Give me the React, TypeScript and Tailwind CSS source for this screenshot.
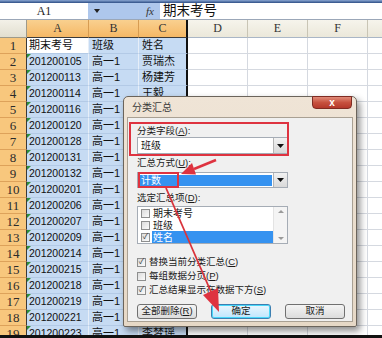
import React from 'react';

const cjk = "font-['Liberation_Sans','Noto_Sans_CJK_SC',sans-serif]";
const serif = "font-['Liberation_Serif','Noto_Sans_CJK_SC',serif]";

const rows = [
  ['期末考号', '班级', '姓名'],
  ['201200105', '高一1', '贾瑞杰'],
  ['201200113', '高一1', '杨建芳'],
  ['201200114', '高一1', '王毅'],
  ['201200116', '高一1', ''],
  ['201200120', '高一1', ''],
  ['201200128', '高一1', ''],
  ['201200131', '高一1', ''],
  ['201200132', '高一1', ''],
  ['201200201', '高一1', ''],
  ['201200206', '高一1', ''],
  ['201200207', '高一1', ''],
  ['201200209', '高一1', ''],
  ['201200214', '高一1', ''],
  ['201200215', '高一1', ''],
  ['201200218', '高一1', ''],
  ['201200219', '高一1', ''],
  ['201200221', '高一1', ''],
  ['201200223', '高一1', '李梦瑶'],
];

function Mn({ label, k }: { label: string; k: string }) {
  return (
    <>
      {label}(<span className="underline">{k}</span>)
    </>
  );
}

function Check({ on }: { on: boolean }) {
  return (
    <span className="flex h-[9px] w-[9px] shrink-0 items-center justify-center border border-[#8e8f8f] bg-gradient-to-br from-[#dcdcdc] to-[#fbfbfb] text-[8px] leading-none text-[#333]">
      {on ? '✓' : ''}
    </span>
  );
}

function DropBtn() {
  return (
    <div className="flex h-full w-[14px] shrink-0 items-center justify-center border-l border-[#b5b5b5] bg-gradient-to-b from-[#f2f2f2] to-[#d9d9d9]">
      <svg width="7" height="4" viewBox="0 0 7 4">
        <path d="M0 0h7L3.5 4z" fill="#111" />
      </svg>
    </div>
  );
}

function SheetRow({ n, a, b, c }: { n: number; a: string; b: string; c: string }) {
  const first = n === 1;
  return (
    <div className="flex h-[16px] shrink-0">
      <div className={`w-[27px] shrink-0 border-b border-r border-b-[#dda25a] border-r-[#3a3a3a] bg-[#f8c77d] text-center text-[13px] leading-[15px] text-[#2b2b2b] ${serif}`}>
        {n}
      </div>
      <div className={`relative w-[62px] shrink-0 border-b border-r border-b-[#b3cae6] border-r-[#e6eef8] pl-[2px] text-[11px] leading-[15px] text-[#111] ${cjk} ${first ? 'bg-white' : 'bg-[#c6dbf3]'}`}>
        {!first && (
          <span className="absolute left-0 top-0 h-0 w-0 border-r-[4px] border-t-[4px] border-r-transparent border-t-[#2f8f3a]" />
        )}
        <span className={first ? '' : 'text-[10.5px]'}>{a}</span>
      </div>
      <div className={`w-[50px] shrink-0 border-b border-r border-b-[#b3cae6] border-r-[#e6eef8] bg-[#c6dbf3] pl-[3px] text-[11px] leading-[15px] text-[#111] ${cjk}`}>
        {b}
      </div>
      <div className={`w-[49px] shrink-0 border-b border-r-2 border-b-[#b3cae6] border-r-[#111] bg-[#c6dbf3] pl-[3px] text-[11px] leading-[15px] text-[#111] ${cjk}`}>
        {c}
      </div>
      <div className="w-[60px] shrink-0 border-b border-r border-[#d5d9e0]" />
      <div className="w-[60px] shrink-0 border-b border-r border-[#d5d9e0]" />
      <div className="w-[60px] shrink-0 border-b border-r border-[#d5d9e0]" />
      <div className="flex-1 border-b border-[#d5d9e0]" />
    </div>
  );
}

export default function App() {
  return (
    <div className={`relative h-[338px] w-[382px] overflow-hidden bg-white ${cjk}`}>
      {/* window top edge */}
      <div className="h-[3px] bg-gradient-to-b from-[#8aa6d2] to-[#2f4f86]" />

      {/* formula bar */}
      <div className="flex h-[17px] border-b border-[#9ba7b8]">
        <div className={`flex w-[88px] items-center justify-center text-[12px] text-[#222] ${serif}`}>A1</div>
        <div className="flex w-[72px] items-center bg-[#aec7ec]">
          <svg className="ml-[6px]" width="6" height="4" viewBox="0 0 6 4">
            <path d="M0 0h6L3 4z" fill="#222" />
          </svg>
          <span className={`ml-[46px] text-[11px] italic text-[#333] ${serif}`}>fx</span>
        </div>
        <div className="flex flex-1 items-center pl-[3px] text-[13.5px] leading-none text-[#111]">期末考号</div>
      </div>

      {/* column headers */}
      <div className={`flex h-[18px] text-[12px] leading-[17px] text-[#333] ${serif}`}>
        <div className="w-[27px] shrink-0 border-b border-r border-[#9e9a8a] bg-gradient-to-b from-[#f3f1e8] to-[#e2dfd0]" />
        <div className="w-[62px] shrink-0 border-b border-r border-b-[#3a3a3a] border-r-[#d79c52] bg-gradient-to-b from-[#f9d08f] to-[#f5b865] text-center">A</div>
        <div className="w-[50px] shrink-0 border-b border-r border-b-[#3a3a3a] border-r-[#d79c52] bg-gradient-to-b from-[#f9d08f] to-[#f5b865] text-center">B</div>
        <div className="w-[49px] shrink-0 border-b border-r-2 border-b-[#3a3a3a] border-r-[#111] bg-gradient-to-b from-[#f9d08f] to-[#f5b865] text-center">C</div>
        <div className="w-[60px] shrink-0 border-b border-r border-b-[#a9b6c6] border-r-[#c9c5b5] bg-gradient-to-b from-[#f6f4ec] to-[#ebe8da] text-center">D</div>
        <div className="w-[60px] shrink-0 border-b border-r border-b-[#a9b6c6] border-r-[#c9c5b5] bg-gradient-to-b from-[#f6f4ec] to-[#ebe8da] text-center">E</div>
        <div className="w-[60px] shrink-0 border-b border-r border-b-[#a9b6c6] border-r-[#c9c5b5] bg-gradient-to-b from-[#f6f4ec] to-[#ebe8da] text-center">F</div>
        <div className="flex-1 border-b border-[#a9b6c6] bg-gradient-to-b from-[#f6f4ec] to-[#ebe8da]" />
      </div>

      {/* cells */}
      <div className="flex flex-col">
        {rows.map((r, i) => (
          <SheetRow key={i} n={i + 1} a={r[0]} b={r[1]} c={r[2]} />
        ))}
      </div>

      {/* subtotal dialog */}
      <div className="absolute left-[123px] top-[96px] flex h-[231px] w-[234px] flex-col rounded-t-[5px] rounded-b-[2px] border border-[#6b645b] bg-gradient-to-b from-[#efe4d6] to-[#e6d8c6] shadow-[3px_4px_7px_rgba(0,0,0,0.45)]">
        <div className="flex h-[20px] shrink-0 items-center pl-[8px] text-[10px] text-[#3a3a3a]">分类汇总</div>
        <button className="absolute right-[4px] top-[-1px] flex h-[13px] w-[40px] items-center justify-center rounded-b-[4px] border border-[#7f2b22] bg-gradient-to-b from-[#e08a78] via-[#c7513f] to-[#b4382b] text-[10px] font-bold leading-none text-white">
          x
        </button>

        <div className="mx-[3px] mb-[4px] flex flex-1 flex-col border border-[#a9a093] bg-[#f0f0f0] pl-[9px] pt-[7px] text-[9.5px] text-[#1a1a1a]">
          <div className="h-[12px] leading-[12px]">
            <Mn label="分类字段" k="A" />:
          </div>
          <div className="flex h-[17px] w-[151px] items-center border border-[#a5acb5] bg-white">
            <span className="flex-1 pl-[3px] text-[10px]">班级</span>
            <DropBtn />
          </div>

          <div className="mt-[3px] h-[12px] leading-[12px]">
            <Mn label="汇总方式" k="U" />:
          </div>
          <div className="mt-[3px] flex h-[16px] w-[151px] items-center border border-[#a5acb5] bg-white">
            <span className="mx-[1px] flex h-[11px] flex-1 items-center bg-[#3592f0] pl-[2px] text-[10px] text-white">计数</span>
            <DropBtn />
          </div>

          <div className="mt-[4px] h-[12px] leading-[12px]">
            <Mn label="选定汇总项" k="D" />:
          </div>
          <div className="mt-[2px] flex h-[38px] w-[151px] border border-[#a5acb5] bg-white">
            <div className="flex flex-1 flex-col">
              {[
                ['期末考号', false],
                ['班级', false],
                ['姓名', true],
              ].map(([t, on]) => (
                <div key={t as string} className="flex h-[12px] items-center pl-[3px]">
                  <Check on={on as boolean} />
                  <span className={`ml-[2px] flex h-[12px] flex-1 items-center pl-[1px] text-[10px] ${on ? 'bg-[#3592f0] text-white' : ''}`}>
                    {t as string}
                  </span>
                </div>
              ))}
            </div>
            <div className="flex w-[14px] shrink-0 flex-col items-center justify-between border-l border-[#e3e3e3] bg-[#f4f4f4] py-[3px]">
              <svg width="6" height="3" viewBox="0 0 6 3">
                <path d="M0 3h6L3 0z" fill="#9a9a9a" />
              </svg>
              <svg width="6" height="3" viewBox="0 0 6 3">
                <path d="M0 0h6L3 3z" fill="#9a9a9a" />
              </svg>
            </div>
          </div>

          <div className="mt-[11px] flex flex-col">
            <div className="flex h-[14px] items-center gap-[3px]">
              <Check on />
              <span><Mn label="替换当前分类汇总" k="C" /></span>
            </div>
            <div className="flex h-[14px] items-center gap-[3px]">
              <Check on={false} />
              <span><Mn label="每组数据分页" k="P" /></span>
            </div>
            <div className="flex h-[14px] items-center gap-[3px]">
              <Check on />
              <span><Mn label="汇总结果显示在数据下方" k="S" /></span>
            </div>
          </div>

          <div className="mt-[7px] flex gap-[14px]">
            <button className="flex h-[15px] w-[60px] items-center justify-center rounded-[3px] border border-[#707070] bg-gradient-to-b from-[#f4f4f4] to-[#dcdcdc] text-[9.5px]">
              <Mn label="全部删除" k="R" />
            </button>
            <button className="flex h-[15px] w-[60px] items-center justify-center rounded-[3px] border border-[#3c7fb1] bg-gradient-to-b from-[#eaf6fd] to-[#bee6fd] text-[9.5px] shadow-[inset_0_0_0_1px_#48d7f9]">
              确定
            </button>
            <button className="flex h-[15px] w-[60px] items-center justify-center rounded-[3px] border border-[#707070] bg-gradient-to-b from-[#f4f4f4] to-[#dcdcdc] text-[9.5px]">
              取消
            </button>
          </div>
        </div>
      </div>

      {/* red annotations */}
      <svg className="pointer-events-none absolute left-0 top-0" width="382" height="338" viewBox="0 0 382 338">
        <rect x="130" y="123" width="158" height="32" fill="none" stroke="#de3340" strokeWidth="2" />
        <rect x="139" y="173" width="39" height="14" fill="none" stroke="#de3340" strokeWidth="2" />
        <line x1="216" y1="160" x2="194" y2="169" stroke="#de3340" strokeWidth="2.5" />
        <polygon points="181,174 196,174.5 192,163" fill="#de3340" />
        <line x1="166" y1="188" x2="211" y2="292" stroke="#d9343c" strokeWidth="1.8" />
        <polygon points="219,312 218,288 203,295" fill="#de3340" />
      </svg>

      {/* screenshot bottom edge */}
      <div className="absolute bottom-0 left-0 h-[3px] w-full bg-[#111]" />
    </div>
  );
}
